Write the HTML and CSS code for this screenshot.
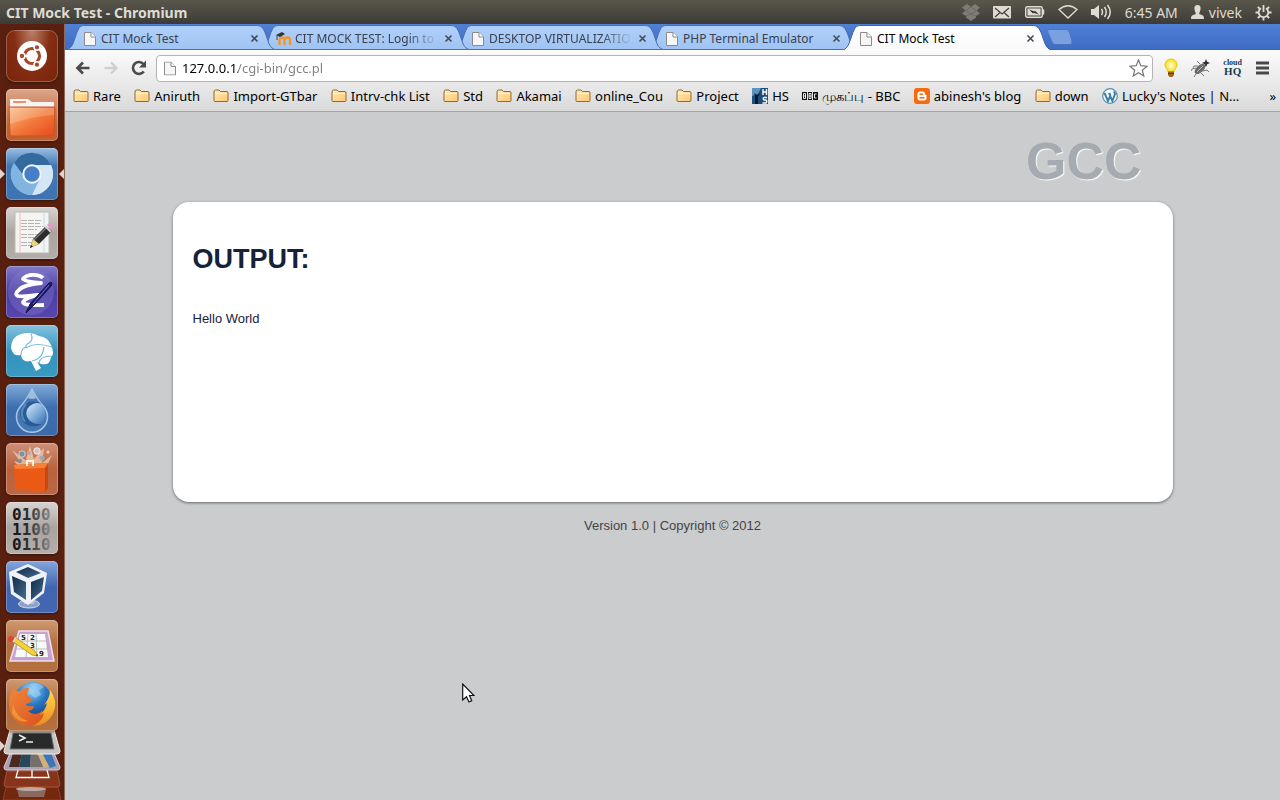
FILE: index.html
```html
<!DOCTYPE html>
<html lang="en">
<head>
<meta charset="utf-8">
<title>CIT Mock Test</title>
<link rel="stylesheet" href="styles.css">
</head>
<body>
<svg class="defs" width="0" height="0" aria-hidden="true">
  <defs>
    <linearGradient id="gTab" x1="0" y1="0" x2="0" y2="1"><stop offset="0" stop-color="#b0d0f8"/><stop offset="1" stop-color="#9fc4f3"/></linearGradient>
    <linearGradient id="gActive" x1="0" y1="0" x2="0" y2="1"><stop offset="0" stop-color="#fff"/><stop offset="1" stop-color="#fafafa"/></linearGradient>
    <linearGradient id="gFolder" x1="0" y1="0" x2="1" y2="1"><stop offset="0" stop-color="#ffeabf"/><stop offset="1" stop-color="#ffc86e"/></linearGradient>
    <linearGradient id="gOrange" x1="0" y1="0" x2="1" y2="1"><stop offset="0" stop-color="#f9c38c"/><stop offset=".5" stop-color="#f27a3a"/><stop offset="1" stop-color="#e8481c"/></linearGradient>
    <linearGradient id="gDrop" x1="0" y1="0" x2="1" y2="1"><stop offset=".1" stop-color="#e4f0fa"/><stop offset=".5" stop-color="#8db8e0"/><stop offset="1" stop-color="#2c68ad"/></linearGradient>
    <linearGradient id="gCube" x1="0" y1="0" x2="1" y2="1"><stop offset="0" stop-color="#0f2a44"/><stop offset="1" stop-color="#486c92"/></linearGradient>
    <linearGradient id="gFox" x1="0" y1="0" x2="1" y2="1"><stop offset="0" stop-color="#f0873a"/><stop offset="1" stop-color="#d8501c"/></linearGradient>
    <linearGradient id="gTail" x1="0" y1="0" x2="0" y2="1"><stop offset="0" stop-color="#ffdc4e"/><stop offset="1" stop-color="#f08a1c"/></linearGradient>
    <radialGradient id="gGlobe" cx=".45" cy=".2" r=".8"><stop offset="0" stop-color="#9ad6f7"/><stop offset=".5" stop-color="#2a78c4"/><stop offset="1" stop-color="#123a80"/></radialGradient>
    <radialGradient id="gBulb"><stop offset="0" stop-color="#fffde0"/><stop offset="1" stop-color="#fbdc10"/></radialGradient>
    <linearGradient id="gBits" x1="0" y1="0" x2="1" y2="0"><stop offset="0" stop-color="#111"/><stop offset=".45" stop-color="#333"/><stop offset="1" stop-color="#8c8886"/></linearGradient>
    <symbol id="page" viewBox="0 0 12 14"><path d="M.5.5H7L11.500 5V13.500H.5Z" fill="#f6f6f6" stroke="#8b8b8b"/><path d="M7 .5V5H11.500" fill="#fff" stroke="#8b8b8b"/></symbol>
    <symbol id="folder" viewBox="0 0 16 14"><path d="M1 3Q1 1 2.500 1H6L7.500 2.500H14Q15 2.500 15 4V11.500Q15 12.500 14 12.500H2Q1 12.500 1 11.500Z" fill="url(#gFolder)" stroke="#8d6a3d"/><path d="M2 4.500H14" stroke="#fff3d8"/></symbol>
    <symbol id="close" viewBox="0 0 9 9"><path d="M1.500 1.500L7.500 7.500M7.500 1.500L1.500 7.500" stroke="#454b55" stroke-width="1.600"/></symbol>
    <symbol id="tab" viewBox="0 0 208 26" preserveAspectRatio="none"><path d="M0 25.500C5 24 6 20 9 11C12 3 13 1.500 18 1.500H189C194 1.500 196 3 199 11C202 20 203 24 208 25.500Z" fill="url(#gTab)" stroke="#4a6fae"/></symbol>
    <symbol id="tabActive" viewBox="0 0 208 26" preserveAspectRatio="none"><path d="M0 26C5 24 6 20 9 11C12 3 13 1.500 18 1.500H189C194 1.500 196 3 199 11C202 20 203 24 208 26Z" fill="url(#gActive)"/><path d="M0 26C5 24 6 20 9 11C12 3 13 1.500 18 1.500H189C194 1.500 196 3 199 11C202 20 203 24 208 26" fill="none" stroke="#3c63ac"/></symbol>
  </defs>
</svg>

<header class="panel">
  <h1 class="panel-title">CIT Mock Test - Chromium</h1>
  <div class="indicators">
    <button class="ind" aria-label="Dropbox"><svg width="18" height="17" viewBox="0 0 18 17"><path d="M5 0L9 3L13 0L18 3.500L14.500 6.500L18 9.500L14 12V13.500L9 17L4 13.500V12L0 9.500L3.500 6.500L0 3.500Z" fill="#7d7c76"/><path d="M3.500 6.500L9 3L14.500 6.500L9 10ZM4 12L9 10L14 12" fill="none" stroke="#66655f" stroke-width=".8"/></svg></button>
    <button class="ind" aria-label="Messages"><svg width="19" height="13" viewBox="0 0 19 13"><rect width="18" height="12.500" rx="1" fill="#dfdbd2"/><path d="M2 2L9 8L16 2M2 11L7 6.500M16 11L11 6.500" fill="none" stroke="#44433d" stroke-width="1.300"/></svg></button>
    <button class="ind" aria-label="Battery"><svg width="20" height="12" viewBox="0 0 20 12"><rect x=".7" y=".7" width="16.600" height="10.600" rx="1.500" fill="none" stroke="#dfdbd2" stroke-width="1.400"/><rect x="2.500" y="2.500" width="13" height="7" fill="#dfdbd2"/><path d="M4 3.500L9.500 5.500L9.700 4.500L14 8.500L8.500 6.700L8.200 7.700Z" fill="#33322e"/><path d="M18.500 3.500V8.500" stroke="#dfdbd2" stroke-width="1.500"/></svg></button>
    <button class="ind" aria-label="Network"><svg width="20" height="14" viewBox="0 0 20 14"><path d="M1 4.500Q10-3 19 4.500L10 13Z" fill="none" stroke="#dfdbd2" stroke-width="1.300"/></svg></button>
    <button class="ind" aria-label="Sound"><svg width="21" height="16" viewBox="0 0 21 16"><path d="M0 5H3L8 1V15L3 11H0Z" fill="#dfdbd2"/><path d="M10.500 5Q12.500 8 10.500 11M13.500 3Q17 8 13.500 13M16.500 1Q22 8 16.500 15" fill="none" stroke="#dfdbd2" stroke-width="1.500"/></svg></button>
    <button class="ind">6:45 AM</button>
    <button class="ind user"><svg width="13" height="14" viewBox="0 0 13 14"><path d="M6.500 0C9 0 10 2 9.500 4.500C9 7 8.200 7.500 8.200 9L12 10.500Q13 11 13 14H0Q0 11 1 10.500L4.800 9C4.800 7.500 4 7 3.500 4.500C3 2 4 0 6.500 0Z" fill="#dfdbd2"/></svg>vivek</button>
    <button class="ind" aria-label="Session"><svg width="17" height="17" viewBox="0 0 17 17"><path d="M6 4.300A4.800 4.800 0 1 0 11 4.300" fill="none" stroke="#dfdbd2" stroke-width="1.800"/><path d="M8.500 1V8M.5 8.500H3.500M13.500 8.500H16.500M8.500 13.500V16.500M2.800 2.800L5 5M14.200 2.800L12 5M2.800 14.200L5 12M14.200 14.200L12 12" stroke="#dfdbd2" stroke-width="1.800"/></svg></button>
  </div>
</header>

<div class="desktop">
  <nav class="launcher" aria-label="Launcher">
    <button class="tile home" aria-label="Dash home"><svg viewBox="0 0 52 52"><circle cx="26" cy="26" r="15" fill="#fff"/><circle cx="26" cy="26" r="7.500" fill="none" stroke="#a44a26" stroke-width="3.200"/><g stroke="#fff" stroke-width="1.500"><path d="M26 26L31 17M26 26L31 35M26 26H14"/><circle cx="26" cy="26" r="5.500" fill="#fff" stroke="none"/><circle cx="16" cy="26" r="2.900" fill="#a44a26"/><circle cx="31" cy="17.300" r="2.900" fill="#a44a26"/><circle cx="31" cy="34.700" r="2.900" fill="#a44a26"/></g></svg></button>
    <button class="tile files" aria-label="Home Folder"><svg viewBox="0 0 52 52"><path d="M4 18V11Q4 10 5 10H22L26 13H47Q48 13 48 14V20H4Z" fill="#f7f5f3"/><path d="M7 12H20V14H7Z" fill="#ee9060"/><path d="M3 18H49L48 46Q48 47 47 47H5Q4 47 4 46Z" fill="url(#gOrange)" stroke="#c4532a"/><path d="M4 19H48V26Q28 27 4 35Z" fill="#fff" opacity=".18"/></svg></button>
    <button class="tile chromium running focused" aria-label="Chromium"><svg viewBox="0 0 52 52"><circle cx="26" cy="26" r="21" fill="#a9cdee"/><path d="M8 15A21 21 0 0 1 45 17H26Q18 18 17 27Z" fill="#336a9f"/><path d="M45 17A21 21 0 0 1 26 47L34 31Q37 22 30 17Z" fill="#d4e6f6"/><path d="M8 15A21 21 0 0 0 26 47L33 32Q20 37 17 27Z" fill="#82b4e2"/><circle cx="26" cy="26" r="8.700" fill="#467fc8" stroke="#eff6fc" stroke-width="2"/></svg></button>
    <button class="tile gray" aria-label="Text Editor"><svg viewBox="0 0 52 52"><path d="M9 5H43V46H9Z" fill="#f4f4f2" stroke="#bcb8b5"/><path d="M14 5V46" stroke="#f2c0c0"/><path d="M38 5V46" stroke="#ccd8ee"/><path d="M15 13.500H36M15 16.500H34M15 19.500H37M15 22.500H31M15 27.500H32M15 30.500H28M15 35.500H27M15 38.500H25" stroke="#b4b4b4" stroke-dasharray="6 1"/><path d="M24 41L27 32L40 19L46 24L33 37Z" fill="#2c2c2c"/><path d="M28 33L41 20" stroke="#777" stroke-width="1.500"/><path d="M24 41L27 32L33 37Z" fill="#e6d584"/><path d="M24 41L25 38L27 39.500Z" fill="#222"/><path d="M41 18L43 16Q46 16 48 20L46 23Z" fill="#e29aca"/><path d="M39 19L45 25" stroke="#d8d8d8" stroke-width="2"/></svg></button>
    <button class="tile emacs" aria-label="Emacs"><svg viewBox="0 0 52 52"><circle cx="25" cy="26" r="23" fill="#8882cc" opacity=".35"/><path d="M37 12Q33 8 24 9Q17 11 17 13Q20 16 35 17Q17 19 13 24Q8 28 12 30Q17 31 32 29Q19 32 17 36Q17 40 38 39" fill="none" stroke="#fff" stroke-width="3.800" stroke-linejoin="round"/><path d="M20 47L24 38L43 17Q46 15 46 19L29 38Z" fill="#1d1d6c" stroke="#111148"/><path d="M27 38L43 19" stroke="#7376cc"/></svg></button>
    <button class="tile cyan" aria-label="Freemind"><svg viewBox="0 0 52 52"><path d="M5 23Q5 12 15 9Q25 6 33 11Q42 12 45 20Q49 29 45 32Q44 41 35 39L31 37L35 43L30 46L25 36Q16 38 15 30Q7 32 5 23Z" fill="#fff"/><path d="M25 9Q28 14 23 18Q18 20 21 23M15 30Q15 22 22 22Q30 17 46 22M26 36Q37 34 38 22M33 38Q34 31 45 31" fill="none" stroke="#79bbd5" stroke-width="1.200"/></svg></button>
    <button class="tile deluge" aria-label="Deluge"><svg viewBox="0 0 52 52"><path d="M26 5Q30 14 38 23A15.500 15.500 0 1 1 14 23Q22 14 26 5Z" fill="#4478b3" stroke="#a5c4e5" stroke-width="1.500"/><path d="M26 6L30 14Q26 16 22 14Z" fill="#b7cce5" opacity=".8"/><circle cx="27" cy="30" r="12.500" fill="url(#gDrop)"/><path d="M36 20Q27 14 19 20Q10 28 17 38Q25 46 36 40Q25 41 21 33Q18 24 27 20Q31 18 36 20Z" fill="#2b5b94"/><path d="M20 20Q12 29 19 38" fill="none" stroke="#5388bd" stroke-width="2"/></svg></button>
    <button class="tile shop" aria-label="Software Centre"><svg viewBox="0 0 52 52"><path d="M26 22L6 7L15 20L8 18L14 25H40L46 12L36 20L38 5L28 16L24 3L20 16Z" fill="#ffe3c4" opacity=".6"/><circle cx="16" cy="11" r="3.200" fill="#7892a8" stroke="#d8d0ca"/><circle cx="31" cy="8" r="3.200" fill="#d8c4bc" stroke="#eee"/><circle cx="23" cy="10" r="2" fill="#bfa8a4"/><circle cx="14" cy="18" r="2" fill="#6f8faa"/><circle cx="36" cy="15" r="2.500" fill="#96acba"/><circle cx="42" cy="9" r="1.500" fill="#f1d5ab"/><path d="M8 22L9 46L39 49L42 45V20Z" fill="#ea5a14"/><path d="M39 49V24L42 20V45Z" fill="#c64810"/><path d="M8 22L42 20L39 25L9 26Z" fill="#f4803a"/><path d="M21 23V18H27V23" fill="none" stroke="#fff0dc" stroke-width="2"/></svg></button>
    <button class="tile gray" aria-label="Hex Editor"><svg viewBox="0 0 52 52"><text class="bits" fill="url(#gBits)" y="18"><tspan x="6" y="18">0100</tspan><tspan x="6" y="33">1100</tspan><tspan x="6" y="48">0110</tspan></text></svg></button>
    <button class="tile vbox" aria-label="VirtualBox"><svg viewBox="0 0 52 52"><ellipse cx="23" cy="43" rx="10.500" ry="4" fill="#8fa1c4" stroke="#cfd8e8"/><path d="M17 36H30L28 43H18Z" fill="#b4c1da"/><path d="M3 11L22 3L41 12L38 32L22 44L5 33Z" fill="#eef2f7"/><path d="M10 11L22 6L35 12L22 17Z" fill="url(#gCube)"/><path d="M6 15L20 21V39L8 31Z" fill="url(#gCube)"/><path d="M25 21L38 16L36 30L25 39Z" fill="url(#gCube)"/></svg></button>
    <button class="tile tan" aria-label="Sudoku"><svg viewBox="0 0 52 52"><path d="M13 11H42L48 41H4Z" fill="#c7a3cf" stroke="#eee0f0" stroke-width="1.500"/><path d="M14 14H39L42 37H9Z" fill="#fafafa"/><path d="M22 14L20 37M30 14L31 37M13 21H40M11 29H41" stroke="#bbb"/><text class="digits"><tspan x="15" y="20">5</tspan><tspan x="24" y="20">2</tspan><tspan x="24" y="28">3</tspan><tspan x="33" y="36">9</tspan></text><path d="M6 21L9 17L29 31L32 36L26 35Z" fill="#f4d23c" stroke="#a98c20" stroke-width=".8"/><path d="M30 35.500L32 36L31 34Z" fill="#222"/><circle cx="5" cy="19" r="3" fill="#e3403c"/><path d="M7 22L10 17.500" stroke="#ddd" stroke-width="1.500"/></svg></button>
    <button class="tile tan" aria-label="Firefox"><svg viewBox="0 0 52 52"><circle cx="27" cy="22" r="19" fill="url(#gGlobe)"/><path d="M24 5Q33 2 38 8L33 11L35 16L29 19L23 14L28 10Z" fill="#a9dcf5" opacity=".5"/><path d="M7 9Q10 13 14 12Q18 8 23 9L21 15Q22 18 27 21Q24 24 20 25Q20 28 28 27Q28 31 22 32Q29 38 36 32L42 40Q35 47 25 47Q8 46 4 32Q1 20 7 9Z" fill="url(#gFox)"/><path d="M7 24Q9 38 22 42Q12 45 6 34Z" fill="#f6a33e" opacity=".7"/><path d="M44 11Q52 22 48 32Q43 46 27 47Q37 42 38 34L34 36Q40 30 41 24L38 26Q44 19 44 11Z" fill="url(#gTail)"/></svg></button>
    <button class="stack" aria-label="More applications"><svg viewBox="0 0 64 71"><path d="M0 12L5 17L0 22Z" fill="#ddd5d0"/><path d="M6 58H58L61 71H3Z" fill="#74290f" stroke="#8c4326"/><path d="M7 42H57L60 55Q60 58 57 58H7Q4 58 4 55Z" fill="#87351a" stroke="#a55232"/><path d="M17 60H46L44 68H19Z" fill="#8a6a5e"/><ellipse cx="31" cy="60" rx="15" ry="2" fill="#bda9a0"/><path d="M18 41L16 48.500H49L47 41M32 41V48" fill="none" stroke="#fff" stroke-width="1.300"/><path d="M10 24H54L60 38Q60 41 58 41H6Q4 41 4 38Z" fill="#aaa1b5" stroke="#d4ccd9"/><path d="M13 24H22L19 38H9Z" fill="#4a2a21"/><path d="M22 24H31L30 38H19Z" fill="#29475a"/><path d="M31 24H38L43 38H30Z" fill="#746f6a"/><path d="M37 24H42L51 37L44 39Z" fill="#d5b17a"/><path d="M42 24H51L56 37L50 39Z" fill="#3b77b6"/><path d="M10 1H54L60 22Q60 25 57 25H7Q4 25 4 22Z" fill="#c6c3c0" stroke="#eee"/><path d="M13 4H51L54 20H10Z" fill="#292a2a" stroke="#777"/><path d="M19 6L25 9L19 12M26 13H33" fill="none" stroke="#eee" stroke-width="1.600"/></svg></button>
  </nav>

  <div class="browser">
    <div class="tabs" role="tablist">
      <div class="tab t1"><svg class="shape"><use href="#tab"/></svg><svg class="fav" width="12" height="14"><use href="#page"/></svg><button class="tab-name" role="tab">CIT Mock Test</button><button class="x" aria-label="Close tab"><svg width="9" height="9"><use href="#close"/></svg></button></div>
      <div class="tab t2"><svg class="shape"><use href="#tab"/></svg><svg class="fav wide" width="16" height="14" viewBox="0 0 16 14"><path d="M3.500 13V8Q4 5.500 6 5.500Q8.500 5.500 8.500 8V13M8.500 8Q9 5.500 11.500 5.500Q14 5.500 14 8V13" fill="none" stroke="#f5952a" stroke-width="2.400"/><path d="M0 3L6 0L9 2L4 5Z" fill="#333"/><path d="M1 3V8" stroke="#444"/></svg><button class="tab-name fade" role="tab">CIT MOCK TEST: Login to t</button><button class="x" aria-label="Close tab"><svg width="9" height="9"><use href="#close"/></svg></button></div>
      <div class="tab t3"><svg class="shape"><use href="#tab"/></svg><svg class="fav" width="12" height="14"><use href="#page"/></svg><button class="tab-name fade" role="tab">DESKTOP VIRTUALIZATIO</button><button class="x" aria-label="Close tab"><svg width="9" height="9"><use href="#close"/></svg></button></div>
      <div class="tab t4"><svg class="shape"><use href="#tab"/></svg><svg class="fav" width="12" height="14"><use href="#page"/></svg><button class="tab-name" role="tab">PHP Terminal Emulator</button><button class="x" aria-label="Close tab"><svg width="9" height="9"><use href="#close"/></svg></button></div>
      <div class="tab active"><svg class="shape"><use href="#tabActive"/></svg><svg class="fav" width="12" height="14"><use href="#page"/></svg><button class="tab-name" role="tab" aria-selected="true">CIT Mock Test</button><button class="x" aria-label="Close tab"><svg width="9" height="9"><use href="#close"/></svg></button></div>
      <button class="new-tab" aria-label="New tab"><svg width="26" height="16" viewBox="0 0 26 16"><path d="M2 .5H19Q21.500.5 22.500 3L25 12Q25.500 15.500 23 15.500H8Q6 15.500 5 13L.7 3Q0 .5 2 .5Z" fill="#7aa0e0" stroke="#4a74c0"/></svg></button>
    </div>
    <div class="chrome">
      <div class="toolbar">
        <button class="tool" aria-label="Back"><svg width="16" height="14" viewBox="0 0 16 14"><path d="M14.500 7H3M8 1.500L2.500 7L8 12.500" fill="none" stroke="#4b4b4b" stroke-width="2.700"/></svg></button>
        <button class="tool" aria-label="Forward"><svg width="16" height="14" viewBox="0 0 16 14"><path d="M1.500 7H13M8 1.500L13.500 7L8 12.500" fill="none" stroke="#cfcfcf" stroke-width="2.400"/></svg></button>
        <button class="tool" aria-label="Reload"><svg width="16" height="16" viewBox="0 0 16 16"><path d="M12.800 11.500A6 6 0 1 1 12.500 4" fill="none" stroke="#4b4b4b" stroke-width="2.600"/><path d="M15 .5V7.500H8Z" fill="#4b4b4b"/></svg></button>
        <div class="omnibox">
          <svg width="12" height="15" viewBox="0 0 12 14"><use href="#page"/></svg>
          <input class="url" type="text" aria-label="Address" value="127.0.0.1/cgi-bin/gcc.pl">
          <button class="star" aria-label="Bookmark this page"><svg width="19" height="18" viewBox="0 0 19 18"><path d="M9.500 1L11.800 6.700L18 7.200L13.300 11.200L14.800 17L9.500 13.800L4.200 17L5.700 11.200L1 7.200L7.200 6.700Z" fill="#fff" stroke="#777" stroke-width="1.200"/></svg></button>
        </div>
        <button class="tool" aria-label="Turn off the lights"><svg width="14" height="20" viewBox="0 0 14 20"><path d="M7 1C11 1 13 4 13 7C13 10 10 11 10 14H4C4 11 1 10 1 7C1 4 3 1 7 1Z" fill="url(#gBulb)" stroke="#e6c810"/><path d="M4 13.500H10V17L8.500 19H5.500L4 17Z" fill="#a0661c"/><path d="M4 15.500H10" stroke="#5f3708"/></svg></button>
        <button class="tool" aria-label="Bug"><svg width="20" height="19" viewBox="0 0 20 19"><ellipse cx="9" cy="10" rx="6.500" ry="3.500" transform="rotate(-42 9 10)" fill="#666"/><path d="M6 12L12 5M8 14L14 8M5 9L1 10L0 12M7 7L3 7L2 9M9 5L6 2M12 12L16 11L18 13M10 14L13 17M5 15L3 18M11 5L15 7" fill="none" stroke="#777"/><path d="M6 13L12 7" stroke="#bbb"/><path d="M15 0L16.200 2.800L19 4L16.200 5.200L15 8L13.800 5.200L11 4L13.800 2.800Z" fill="#333"/></svg></button>
        <button class="tool cloud" aria-label="cloudHQ">cloud<br><b>HQ</b></button>
        <button class="tool" aria-label="Menu"><svg width="13" height="14" viewBox="0 0 13 14"><path d="M0 2H13M0 7H13M0 12H13" stroke="#484848" stroke-width="2.800"/></svg></button>
      </div>
      <nav class="bookmarks" aria-label="Bookmarks">
        <div class="marks">
          <a href="#"><svg width="16" height="14"><use href="#folder"/></svg>Rare</a>
          <a href="#"><svg width="16" height="14"><use href="#folder"/></svg>Aniruth</a>
          <a href="#"><svg width="16" height="14"><use href="#folder"/></svg>Import-GTbar</a>
          <a href="#"><svg width="16" height="14"><use href="#folder"/></svg>Intrv-chk List</a>
          <a href="#"><svg width="16" height="14"><use href="#folder"/></svg>Std</a>
          <a href="#"><svg width="16" height="14"><use href="#folder"/></svg>Akamai</a>
          <a href="#"><svg width="16" height="14"><use href="#folder"/></svg>online_Cou</a>
          <a href="#"><svg width="16" height="14"><use href="#folder"/></svg>Project</a>
          <a href="#"><svg width="16" height="16" viewBox="0 0 16 16"><path d="M0 0H16V16H0Z" fill="#1d4f7e"/><path d="M0 0H9L6 6L0 8Z" fill="#5d94bd"/><path d="M3 16V8L2 5L5 7L8 5L6 9V16Z" fill="#0a1826"/><path d="M11 1V7M14.500 1V7M11 4H14.500M15 9.500H12Q10.500 10.500 12 12H14Q15.500 13.500 14 15H10.500" fill="none" stroke="#fff" stroke-width="1.400"/></svg>HS</a>
          <a href="#"><svg width="16" height="8" viewBox="0 0 16 8"><path d="M0 0H16V8H0Z" fill="#111"/><path d="M5.500 0V8M10.500 0V8" stroke="#e4e4e4"/><path d="M1.500 1.500H3.500V6.500H1.500ZM1.500 4H4M7 1.500H9V6.500H7ZM7 4H9.500M14.500 2H12.500V6H14.500" fill="none" stroke="#fff" stroke-width=".9"/></svg>முகப்பு - BBC</a>
          <a href="#"><svg width="16" height="16" viewBox="0 0 16 16"><rect width="16" height="16" rx="3" fill="#f76b0c"/><path d="M6 3.500H8.500Q11 3.500 11 6Q11 7 12.500 7V10Q12.500 12.500 10 12.500H6Q3.500 12.500 3.500 10V6Q3.500 3.500 6 3.500Z" fill="#fff"/><path d="M6 6.200H8.500M6 9.800H10" stroke="#f76b0c" stroke-width="1.400" stroke-linecap="round"/></svg>abinesh's blog</a>
          <a href="#"><svg width="16" height="14"><use href="#folder"/></svg>down</a>
          <a href="#"><svg width="16" height="16" viewBox="0 0 16 16"><circle cx="8" cy="8" r="7.300" fill="#f3f8fb" stroke="#5590b2" stroke-width="1.200"/><path d="M2.500 5L6 13L8.300 7.500L7.500 5M7 5L10.300 13L13 6Q13 4.500 11.500 4" fill="none" stroke="#3b7fa6" stroke-width="1.900"/></svg>Lucky's Notes | N…</a>
        </div>
        <button class="more" aria-label="More bookmarks">»</button>
      </nav>
    </div>
    <main class="page">
      <div class="wrap">
        <h1 class="brand">GCC</h1>
        <section class="card">
          <h2 class="card-title">OUTPUT:</h2>
          <p class="result">Hello World</p>
        </section>
        <footer class="foot">Version 1.0 | Copyright © 2012</footer>
      </div>
    </main>
  </div>
</div>
<svg class="cursor" width="13" height="20" viewBox="0 0 13 20" aria-hidden="true"><path d="M.7 1V17L4.500 13.800L7 19L9.700 17.800L7.500 12.500H12Z" fill="#fff" stroke="#111" stroke-width="1.200"/></svg>
</body>
</html>
```
FILE: styles.css
```css
* { box-sizing: border-box; }
body {
  margin: 0;
  height: 100vh;
  overflow: hidden;
  display: flex;
  flex-direction: column;
  font-family: "Noto Sans", "Open Sans", sans-serif;
  font-size: 13px;
  color: #000;
}
button { border: 0; margin: 0; padding: 0; background: none; font: inherit; color: inherit; }
svg { display: block; flex: none; }
.defs { position: absolute; }

.panel {
  height: 24px;
  flex: none;
  display: flex;
  justify-content: space-between;
  align-items: center;
  padding: 0 8px 0 6px;
  background: linear-gradient(#59574c, #3c3b37);
  color: #dfdbd2;
}
.panel-title { margin: 0; font-size: 14px; font-weight: 700; }
.indicators { display: flex; align-items: center; gap: 13px; font-size: 14px; }
.ind { display: flex; align-items: center; }
.user { gap: 5px; }

.desktop { flex: 1; min-height: 0; display: flex; }

.launcher {
  width: 65px;
  flex: none;
  padding-top: 6px;
  display: flex;
  flex-direction: column;
  align-items: center;
  gap: 7px;
  overflow: hidden;
  background: #5a200f;
  border-right: 1px solid #8a6a5e;
}
.tile {
  position: relative;
  width: 52px;
  height: 52px;
  flex: none;
  border-radius: 5px;
  box-shadow: inset 0 0 0 1px rgba(255, 255, 255, .25), 0 1px 3px rgba(0, 0, 0, .4);
}
.tile svg { width: 52px; height: 52px; }
.home { border-radius: 9px; background: radial-gradient(ellipse at 50% 0, #bd8068, #842e14 50%, #782409); }
.files { background: linear-gradient(#dba68c, #c0622f 70%); }
.chromium { background: linear-gradient(#9bbfe3, #3f76b4 35%, #3d74b1); }
.gray { background: linear-gradient(#d8d4d2, #aaa4a1 50%, #b4aeab); }
.emacs { background: linear-gradient(#8179c8, #4b3ca4 50%, #5646ae); }
.cyan { background: linear-gradient(#84c4de, #3593bd 50%, #3a9ac0); }
.deluge { background: linear-gradient(#82aad8, #3b6fb0 45%, #3d6aa8); }
.shop { background: linear-gradient(#ce9078, #b9623e 50%, #bd6845); }
.vbox { background: linear-gradient(#86a5dc, #3f66b0 50%, #4468b0); }
.tan { background: linear-gradient(#d09a70, #b06c3c 50%, #b5713f); }
.running::before, .focused::after {
  content: "";
  position: absolute;
  top: 21px;
  border: 5px solid transparent;
}
.running::before { left: -6px; border-left-color: #ddd5d0; border-right-width: 0; }
.focused::after { right: -6px; border-right-color: #ddd5d0; border-left-width: 0; }
.stack { width: 64px; height: 71px; flex: none; margin-top: -9px; }
.stack svg { width: 64px; height: 71px; }
.bits { font: 700 16px "DejaVu Sans Mono", monospace; }
.digits { font: 700 7px "DejaVu Sans", sans-serif; fill: #222; }

.browser { flex: 1; min-width: 0; display: flex; flex-direction: column; }
.tabs {
  height: 26px;
  flex: none;
  display: flex;
  padding-left: 2px;
  background: linear-gradient(#4f80d6, #3f6cc4);
  border-bottom: 1px solid #3c63ac;
}
.tab {
  position: relative;
  flex: 0 1 208px;
  min-width: 0;
  height: 26px;
  margin-right: -14px;
  padding: 3px 16px 0 17px;
  display: flex;
  align-items: center;
  gap: 5px;
  font-size: 12px;
  color: #3a4150;
}
.t1 { z-index: 4; }
.t2 { z-index: 3; }
.t3 { z-index: 2; }
.t4 { z-index: 1; }
.active { z-index: 5; color: #000; }
.shape { position: absolute; inset: 0; width: 100%; height: 26px; z-index: -1; }
.wide { margin: 0 -2px 0 -8px; }
.t2 { padding-left: 23px; }
.tab-name { flex: 1; min-width: 0; overflow: hidden; white-space: nowrap; text-align: left; }
.fade { -webkit-mask-image: linear-gradient(90deg, #000 78%, transparent); mask-image: linear-gradient(90deg, #000 78%, transparent); }
.new-tab { align-self: center; margin-left: 10px; }

.chrome {
  flex: none;
  background: linear-gradient(#fbfbfb, #dadada);
  border-bottom: 1px solid #a2a2a2;
}
.toolbar { height: 34px; display: flex; align-items: center; gap: 12px; padding: 2px 10px 0 10px; }
.tool { display: flex; justify-content: center; min-width: 16px; }
.omnibox {
  flex: 1;
  height: 27px;
  margin: 0 -2px 0 -3px;
  padding: 0 4px 0 7px;
  display: flex;
  align-items: center;
  gap: 6px;
  background: #fff;
  border: 1px solid #b4b4b4;
  border-radius: 4px;
}
.url {
  flex: 1;
  min-width: 0;
  border: 0;
  padding: 0;
  font: inherit;
  color: transparent;
  background: linear-gradient(90deg, #000 56px, #808080 56px);
  -webkit-background-clip: text;
  background-clip: text;
}
.cloud { display: block; font: 700 8px/8px "Liberation Serif", serif; color: #163a52; }
.cloud b { font-size: 11px; line-height: 9px; }
.bookmarks { height: 27px; display: flex; align-items: center; justify-content: space-between; padding: 0 4px 3px 8px; gap: 30px; }
.marks { flex: 1; min-width: 0; display: flex; justify-content: space-between; }
.marks a { display: flex; align-items: center; gap: 4px; color: #000; text-decoration: none; white-space: nowrap; }

.page {
  flex: 1;
  min-height: 0;
  background: #cbccce;
  font-family: "Liberation Sans", Arial, sans-serif;
}
.wrap { max-width: 1000px; margin: 0 auto; }
.brand {
  margin: 0;
  padding: 19px 31px 11px;
  text-align: right;
  font-size: 52px;
  line-height: 60px;
  color: #a6abb1;
  text-shadow: 1px 1px 1px #fff;
}
.card {
  min-height: 300px;
  padding: 41px 20px 20px;
  background: #fff;
  border-radius: 16px;
  box-shadow: 0 1px 3px rgba(0, 0, 0, .5);
}
.card-title { margin: 0; font-size: 27px; line-height: 32px; color: #152238; }
.result { margin: 36px 0 0; line-height: 16px; color: #152238; }
.foot { margin-top: 16px; text-align: center; line-height: 16px; color: #444; }
.cursor { position: absolute; left: 462px; top: 683px; }
```
